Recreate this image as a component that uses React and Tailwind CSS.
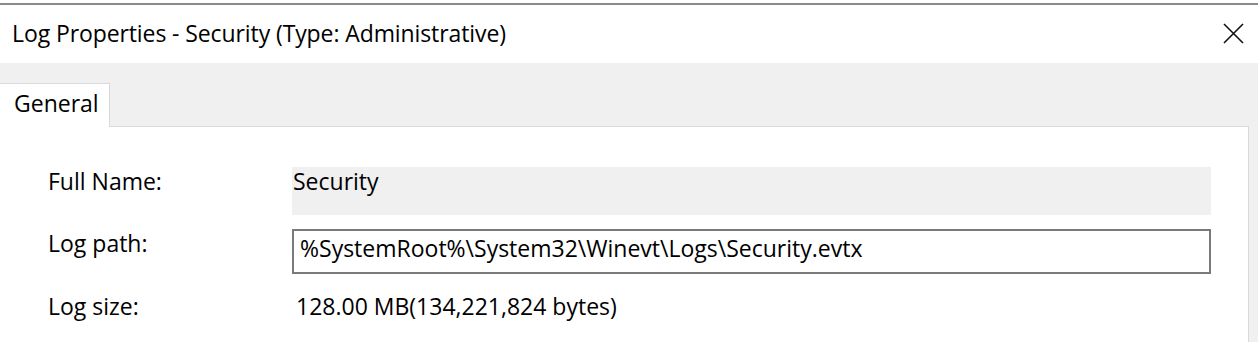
import React from 'react';

export default function App() {
  return (
    <div className="w-[1258px] h-[342px] overflow-hidden bg-white text-black flex flex-col text-[23px] leading-none" style={{ fontFamily: '"Open Sans", "Noto Sans", sans-serif' }}>
      {/* Window edge */}
      <div className="h-[3px] bg-white shrink-0" />
      <div className="h-[2px] bg-[#8a8a8a] shrink-0" />

      {/* Title bar */}
      <div className="h-[58px] shrink-0 flex items-start justify-between pl-[12px] pr-[14px] pt-[17px]">
        <span className="tracking-[-0.1px]">Log Properties - Security (Type: Administrative)</span>
        <svg width="21" height="21" viewBox="0 0 21 21" className="mt-[1px]">
          <path d="M1 1 L20 20 M20 1 L1 20" stroke="#111" strokeWidth="1.6" fill="none" />
        </svg>
      </div>

      {/* Dialog body */}
      <div className="flex-1 bg-[#f0f0f0] flex flex-col pt-[20px] pr-[9px]">
        {/* Tab strip */}
        <div className="flex h-[44px] shrink-0">
          <div className="w-[110px] bg-white border-t border-r border-[#d9d9d9] pl-[14px] pt-[8px] relative z-10">
            <span>General</span>
          </div>
          <div className="flex-1 border-b border-[#d9d9d9]" />
        </div>

        {/* Panel */}
        <div className="flex-1 bg-white border-r border-[#d9d9d9] flex flex-col pt-[40px] pl-[48px] pr-[37px]">
          <div className="flex h-[48px]">
            <div className="w-[244px] pt-[3px]">Full Name:</div>
            <div className="flex-1 bg-[#f0f0f0] pl-[1px] pt-[3px]">Security</div>
          </div>
          <div className="flex h-[45px] mt-[14px]">
            <div className="w-[244px] pt-[3px]">Log path:</div>
            <div className="flex-1 border-2 border-[#7a7a7a] pl-[6px] pt-[6px]">%SystemRoot%\System32\Winevt\Logs\Security.evtx</div>
          </div>
          <div className="flex mt-[21px]">
            <div className="w-[248px]">Log size:</div>
            <div>128.00 MB(134,221,824 bytes)</div>
          </div>
        </div>
      </div>
    </div>
  );
}
